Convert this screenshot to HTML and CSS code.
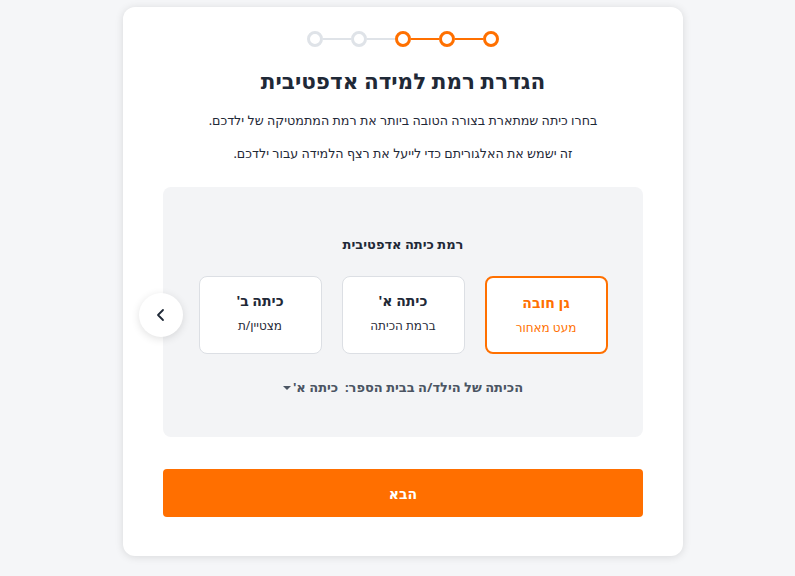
FILE: index.html
```html
<!DOCTYPE html>
<html lang="he" dir="rtl">
<head>
<meta charset="utf-8">
<link rel="stylesheet" href="styles.css">
</head>
<body>
<div class="page">
  <div class="card">
    <div class="stepper">
      <span class="dot on"></span><span class="line on"></span>
      <span class="dot on"></span><span class="line on"></span>
      <span class="dot on"></span><span class="line"></span>
      <span class="dot"></span><span class="line"></span>
      <span class="dot"></span>
    </div>
    <h1 class="title">הגדרת רמת למידה אדפטיבית</h1>
    <p class="desc">בחרו כיתה שמתארת בצורה הטובה ביותר את רמת המתמטיקה של ילדכם.</p>
    <p class="desc desc2">זה ישמש את האלגוריתם כדי לייעל את רצף הלמידה עבור ילדכם.</p>
    <div class="panel">
      <div class="panel-label">רמת כיתה אדפטיבית</div>
      <div class="options">
        <div class="opt selected">
          <div class="opt-title">גן חובה</div>
          <div class="opt-sub">מעט מאחור</div>
        </div>
        <div class="opt">
          <div class="opt-title">כיתה א'</div>
          <div class="opt-sub">ברמת הכיתה</div>
        </div>
        <div class="opt">
          <div class="opt-title">כיתה ב'</div>
          <div class="opt-sub">מצטיין/ת</div>
        </div>
      </div>
      <div class="school">הכיתה של הילד/ה בבית הספר:&nbsp; כיתה א'<span class="caret"></span></div>
      <button class="arrow" aria-label="הבא">
        <svg width="14" height="14" viewBox="0 0 14 14"><path d="M9 2 L4 7 L9 12" fill="none" stroke="#1f2937" stroke-width="1.8" stroke-linecap="round" stroke-linejoin="round"/></svg>
      </button>
    </div>
    <button class="next">הבא</button>
  </div>
</div>
</body>
</html>
```
FILE: styles.css
```css
* { box-sizing: border-box; }
html, body { margin: 0; padding: 0; }
body {
  background: #f5f6f8;
  font-family: "Noto Sans", "DejaVu Sans", sans-serif;
  color: #1f2937;
}
.page {
  width: 795px;
  height: 576px;
  padding-top: 7px;
  padding-left: 11px;
  display: flex;
  justify-content: center;
}
.card {
  width: 560px;
  height: 549px;
  background: #fff;
  border-radius: 12px;
  box-shadow: 0 1px 8px rgba(0,0,0,0.12);
  padding: 24px 40px 0;
  display: flex;
  flex-direction: column;
  align-items: center;
}
.stepper {
  display: flex;
  flex-direction: row;
  align-items: center;
  height: 16px;
}
.dot {
  width: 16px;
  height: 16px;
  border-radius: 50%;
  border: 3px solid #dfe3e8;
  background: #fff;
}
.dot.on { border-color: #ff7000; }
.line {
  width: 28px;
  height: 2px;
  background: #dfe3e8;
}
.line.on { background: #ff7000; }
.title {
  margin: 18px 0 0;
  font-size: 21.5px;
  line-height: 32px;
  font-weight: 700;
  color: #1f2937;
}
.desc {
  margin: 13px 0 0;
  font-size: 12.7px;
  line-height: 20px;
  color: #1f2937;
}
.desc2 { margin-top: 13px; }
.panel {
  position: relative;
  margin-top: 24px;
  width: 480px;
  height: 250px;
  background: #f3f4f6;
  border-radius: 8px;
  display: flex;
  flex-direction: column;
  align-items: center;
  padding-top: 47px;
}
.panel-label {
  font-size: 13px;
  font-weight: 700;
  line-height: 20px;
  color: #1f2937;
}
.options {
  margin-top: 22px;
  display: flex;
  gap: 20px;
}
.opt {
  width: 123px;
  height: 78px;
  background: #fff;
  border: 1px solid #dcdfe4;
  border-radius: 8px;
  display: flex;
  flex-direction: column;
  align-items: center;
  padding-top: 14px;
}
.opt.selected {
  border: 2px solid #ff7000;
  padding-top: 15px;
}
.opt-title {
  font-size: 14px;
  font-weight: 700;
  line-height: 20px;
  color: #1f2937;
}
.opt-sub {
  margin-top: 6px;
  font-size: 12px;
  line-height: 18px;
  color: #1f2937;
}
.selected .opt-title { color: #ff7000; }
.selected .opt-sub { color: #ff7000; }
.school {
  margin-top: 23px;
  font-size: 13px;
  font-weight: 700;
  line-height: 20px;
  color: #4b5563;
  display: flex;
  align-items: center;
}
.caret {
  display: inline-block;
  width: 0;
  height: 0;
  border-left: 4px solid transparent;
  border-right: 4px solid transparent;
  border-top: 4px solid #4b5563;
  margin-right: 2px;
  margin-top: 2px;
}
.arrow {
  position: absolute;
  left: -24px;
  top: 106px;
  width: 44px;
  height: 44px;
  border-radius: 50%;
  border: none;
  background: #fff;
  box-shadow: 0 2px 8px rgba(0,0,0,0.12);
  display: flex;
  align-items: center;
  justify-content: center;
  padding: 0;
}
.next {
  margin-top: 32px;
  width: 480px;
  height: 48px;
  border: none;
  border-radius: 4px;
  background: #ff6f00;
  color: #fff;
  font-family: inherit;
  font-size: 14px;
  font-weight: 700;
}
```
